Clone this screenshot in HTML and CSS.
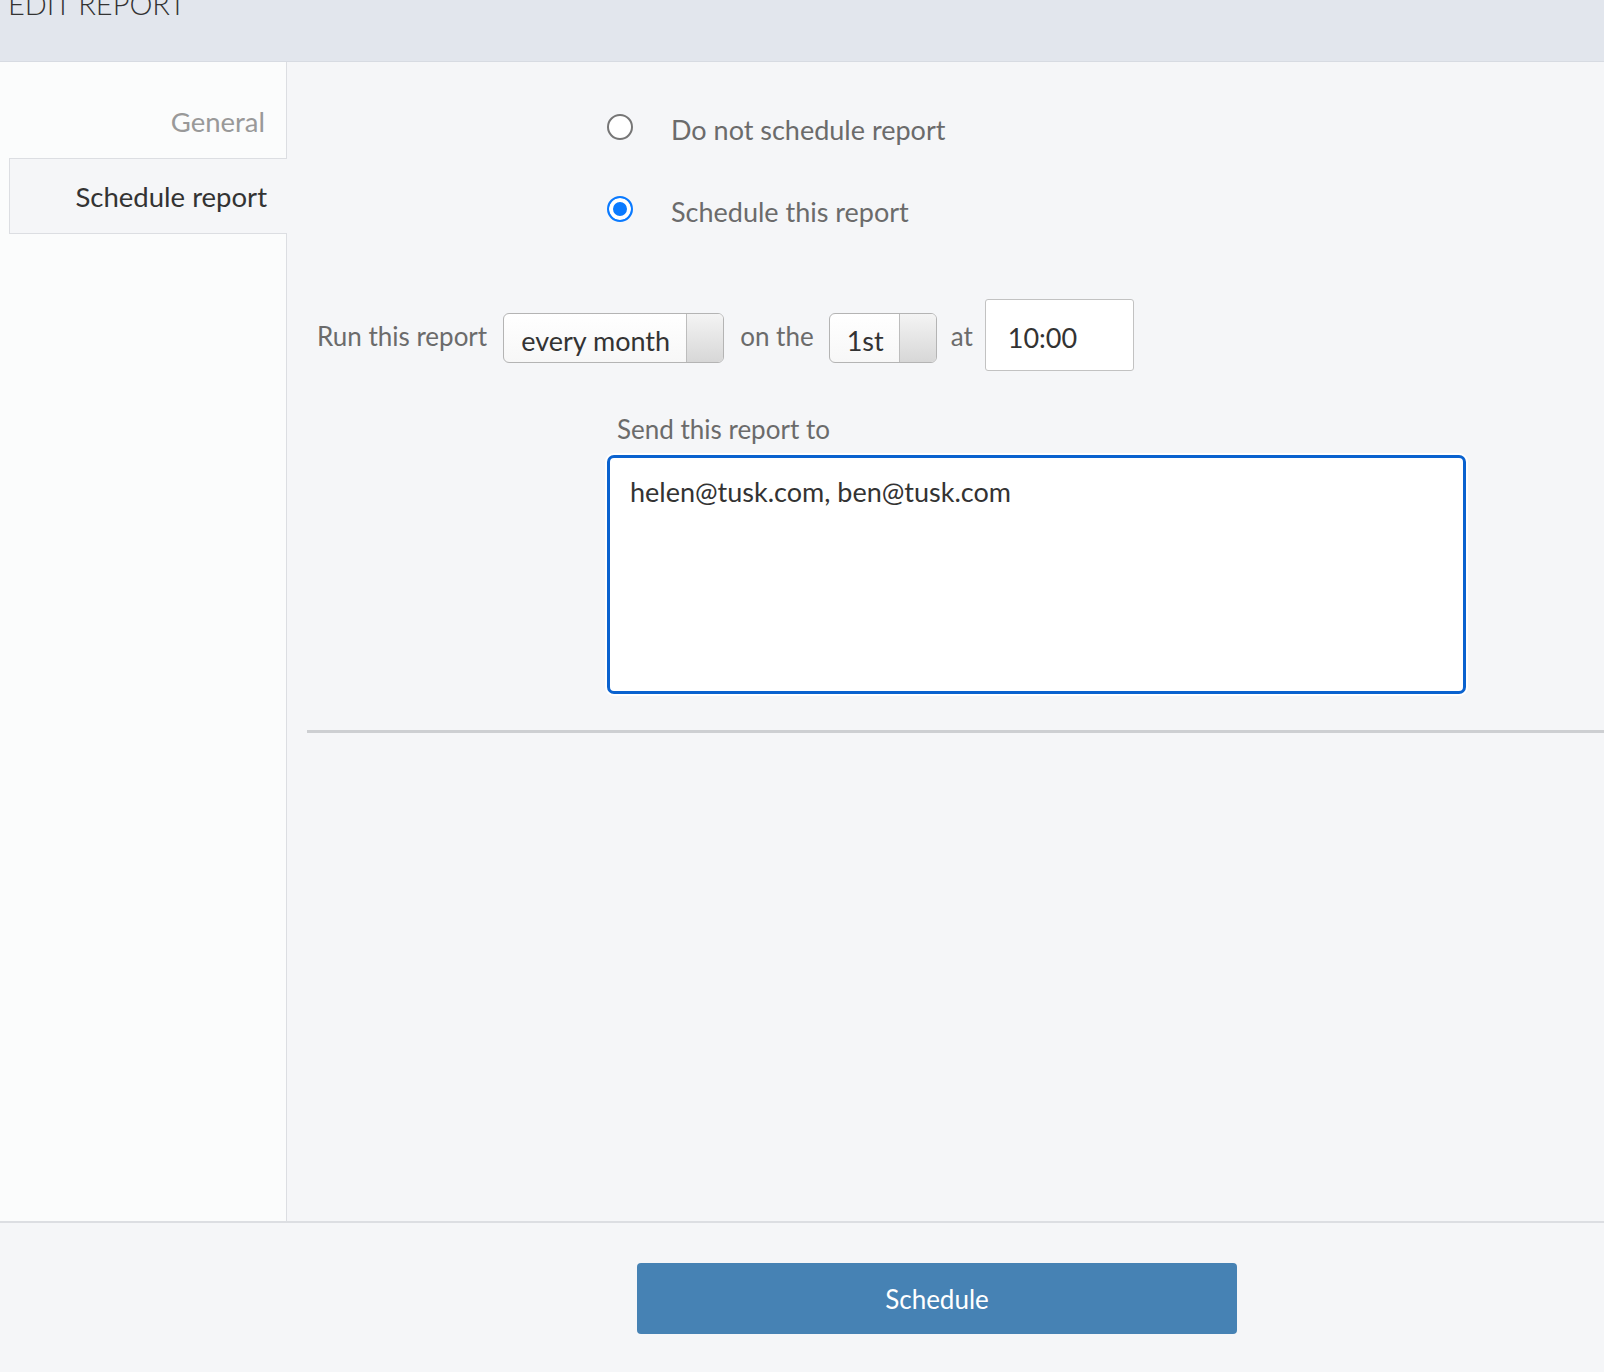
FILE: index.html
```html
<!DOCTYPE html>
<html lang="en">
  <head>
    <meta charset="UTF-8" />
    <meta name="viewport" content="width=device-width, initial-scale=1.0" />
    <title>Edit report</title>
    <link rel="stylesheet" href="styles.css">
  </head>
  <body>
    <div class="page-header">
      <h1>EDIT REPORT</h1>
    </div>
    <div class="page-body">
      <div class="side-nav">
        <div class="nav-item">General</div>
        <div class="nav-item active">Schedule report</div>
        <div class="nav-fill"></div>
      </div>
      <div class="main-panel">
        <div class="schedule-options">
          <label class="option">
            <span class="radio"></span>
            <span class="option-text">Do not schedule report</span>
          </label>
          <label class="option">
            <span class="radio checked"></span>
            <span class="option-text">Schedule this report</span>
          </label>
        </div>
        <div class="run-row">
          <span class="field-label">Run this report</span>
          <div class="select wide">
            <span class="select-value">every month</span>
            <span class="select-arrow"></span>
          </div>
          <span class="field-label">on the</span>
          <div class="select">
            <span class="select-value">1st</span>
            <span class="select-arrow"></span>
          </div>
          <span class="field-label">at</span>
          <input class="timeInput" type="text" value="10:00" />
        </div>
        <div class="send-block">
          <div class="send-label">Send this report to</div>
          <textarea class="recipients">helen@tusk.com, ben@tusk.com</textarea>
        </div>
        <div class="divider"></div>
      </div>
    </div>
    <div class="page-footer">
      <button class="scheduleBTN">Schedule</button>
    </div>
  </body>
</html>
```

FILE: styles.css
```css
:root {
  --main-bg: #f5f6f8;
  --side-bg: #fbfcfc;
  --header-bg: #e2e6ed;
  --line-color: #dcdee2;
  --label-color: #6b6b6b;
  --text-color: #333;
  --blue: #0a7aff;
}

* {
  box-sizing: border-box;
}

body {
  margin: 0;
  background-color: var(--main-bg);
  font-family: Lato, "Open Sans", sans-serif;
  font-size: 26px;
  color: var(--text-color);
}

.page-header {
  height: 62px;
  overflow: hidden;
  background-color: var(--header-bg);
  border-bottom: 1px solid #d7dbe2;
}

.page-header h1 {
  margin: -13px 0 0 8px;
  font-size: 29px;
  font-weight: 300;
  line-height: 34px;
  color: #333;
}

.page-body {
  display: flex;
  height: 1159px;
}

.side-nav {
  width: 287px;
  flex-shrink: 0;
  display: flex;
  flex-direction: column;
  background-color: var(--side-bg);
}

.nav-item {
  text-align: right;
  font-size: 27.5px;
  line-height: 32px;
  padding: 44px 21px 20px 0;
  border-right: 1px solid var(--line-color);
  width: 287px;
  color: #999;
}

.nav-item.active {
  margin-left: 9px;
  width: 278px;
  padding: 22px 20px 20px 0;
  color: var(--text-color);
  background-color: var(--main-bg);
  border: 1px solid var(--line-color);
  border-right: none;
}

.nav-fill {
  flex: 1;
  width: 287px;
  border-right: 1px solid var(--line-color);
}

.main-panel {
  flex: 1;
  padding-left: 20px;
}

.schedule-options {
  margin-left: 300px;
  padding-top: 45px;
  display: flex;
  flex-direction: column;
  gap: 42px;
}

.option {
  display: flex;
  align-items: center;
  height: 40px;
}

.radio {
  width: 26px;
  height: 26px;
  border-radius: 50%;
  border: 2px solid #767676;
  background-color: #fff;
}

.radio.checked {
  border-color: var(--blue);
  background-color: var(--blue);
  box-shadow: inset 0 0 0 4px #fff;
}

.option-text {
  margin-left: 38px;
  padding-top: 6px;
  font-size: 27px;
  line-height: 32px;
  color: var(--label-color);
}

.run-row {
  margin-top: 70px;
  padding-left: 10px;
  display: flex;
  align-items: center;
  height: 72px;
}

.field-label {
  color: var(--label-color);
  line-height: 32px;
  margin-right: 15px;
  padding-top: 2px;
}

.select {
  display: flex;
  height: 50px;
  margin-top: 6px;
  margin-right: 14px;
  border: 1px solid #b4b4b4;
  border-radius: 6px;
  overflow: hidden;
  background: linear-gradient(#fff, #f7f7f7);
}

.select.wide {
  width: 221px;
  margin-left: 1px;
  margin-right: 16px;
}

.select-value {
  flex: 1;
  padding: 10px 0 0 17px;
  font-size: 27px;
  line-height: 34px;
  color: var(--text-color);
}

.select:not(.wide) {
  width: 108px;
}

.select-arrow {
  width: 37px;
  border-left: 1px solid #bdbdbd;
  background: linear-gradient(#f4f4f4, #d7d7d7);
}

.timeInput {
  width: 149px;
  height: 72px;
  margin-left: -3px;
  padding: 4px 0 0 22px;
  border: 1px solid #c2c2c2;
  border-radius: 3px;
  background-color: #fff;
  font-family: Lato, sans-serif;
  font-size: 27px;
  color: var(--text-color);
}

.send-block {
  margin-left: 300px;
  margin-top: 42px;
}

.send-label {
  padding-left: 10px;
  line-height: 32px;
  color: var(--label-color);
}

.recipients {
  display: block;
  margin-top: 10px;
  width: 859px;
  height: 239px;
  padding: 18px 20px;
  border: 3px solid #0a62cf;
  border-radius: 7px;
  outline: none;
  resize: none;
  background-color: #fff;
  font-family: Lato, sans-serif;
  font-size: 27px;
  line-height: 32px;
  color: var(--text-color);
  box-shadow: 0 0 0 2px #fff;
}

.divider {
  margin-top: 36px;
  border-top: 3px solid #cdcfd2;
}

.page-footer {
  height: 151px;
  border-top: 2px solid var(--line-color);
  padding: 40px 0 0 637px;
}

.scheduleBTN {
  width: 600px;
  height: 71px;
  border: none;
  border-radius: 4px;
  background-color: #4682b4;
  color: #fff;
  font-family: Lato, sans-serif;
  font-size: 26px;
  cursor: pointer;
}
```
